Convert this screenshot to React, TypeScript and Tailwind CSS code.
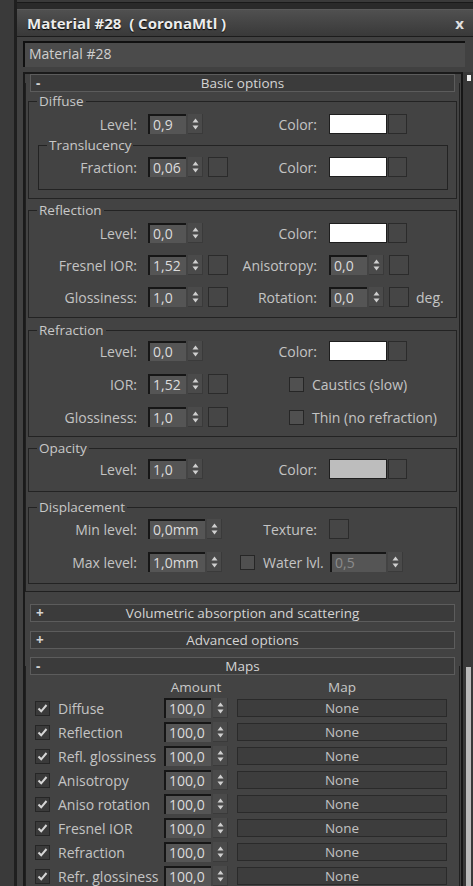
import { ReactNode } from "react";

const labelTxt = "text-[#c4c4c4]";

const Arrows = () => (
  <div className="ml-[2px] w-[15px] h-[20px] shrink-0 bg-[#4a4a4a] border-b border-r border-[#3a3a3a]">
    <svg width="15" height="20" viewBox="0 0 15 20">
      <path d="M4.5 8.5 L7.5 4.5 L10.5 8.5Z" fill="#d0d0d0" />
      <path d="M4.5 11.5 L7.5 15.5 L10.5 11.5Z" fill="#d0d0d0" />
    </svg>
  </div>
);

type TSpin = { value: string; field?: string; muted?: boolean };

const Spin = ({ value, field = "w-[38px]", muted }: TSpin) => (
  <div className="flex items-center h-[20px] shrink-0">
    <div
      className={`${field} h-[20px] border-t-2 border-l-2 border-[#161616] bg-[#555555] pl-[3px] text-[14px] leading-[17px] ${
        muted ? "text-[#8c8c8c]" : "text-[#dcdcdc]"
      }`}
    >
      {value}
    </div>
    <Arrows />
  </div>
);

const Sq = ({ ml = "ml-[5px]" }: { ml?: string }) => (
  <div className={`${ml} w-[20px] h-[20px] shrink-0 border border-[#2b2b2b] bg-[#464646]`} />
);

const Check = ({ on, dark }: { on?: boolean; dark?: boolean }) => (
  <div
    className={`w-[15px] h-[15px] shrink-0 border border-[#262626] flex items-center justify-center ${
      dark ? "bg-[#3a3a3a]" : "bg-[#505050]"
    }`}
  >
    {on && (
      <svg width="11" height="11" viewBox="0 0 11 11">
        <path d="M1.5 5.5 L4.2 8.3 L9.5 2" fill="none" stroke="#d6d6d6" strokeWidth="2" />
      </svg>
    )}
  </div>
);

const RLabel = ({ children }: { children: ReactNode }) => (
  <div className="w-[89px] shrink-0 text-right whitespace-nowrap">{children}</div>
);

const Color = ({ swatch = "bg-white" }: { swatch?: string }) => (
  <div className="ml-[12px] flex items-center">
    <div className={`w-[58px] h-[20px] ${swatch} border border-[#1e1e1e]`} />
    <div className="ml-[1px] w-[19px] h-[20px] border border-[#2b2b2b] bg-[#464646]" />
  </div>
);

type TRow = {
  lw?: string;
  label: string;
  value: string;
  map?: boolean;
  right?: ReactNode;
};

const Row = ({ lw = "w-[108px]", label, value, map, right }: TRow) => (
  <div className="flex items-center h-[20px]">
    <div className={`${lw} shrink-0 text-right whitespace-nowrap`}>{label}</div>
    <div className="ml-[11px]">
      <Spin value={value} />
    </div>
    {map ? <Sq /> : <div className="ml-[5px] w-[20px] shrink-0" />}
    {right}
  </div>
);

const Group = ({
  title,
  className = "",
  children,
}: {
  title: string;
  className?: string;
  children: ReactNode;
}) => (
  <fieldset className={`border border-[#232323] ${className}`}>
    <legend className="ml-[8px] px-[2px] text-[13.5px] leading-[16px] text-[#c8c8c8]">
      {title}
    </legend>
    {children}
  </fieldset>
);

const Header = ({ title, open }: { title: string; open?: boolean }) => (
  <div className="relative z-10 ml-[5px] mr-[6px] h-[18px] border border-[#5c5c5c] bg-[#3b3b3b] flex items-center text-[13.5px] leading-[16px] text-[#d4d4d4]">
    <span className="w-[16px] pl-[5px] font-bold">{open ? "-" : "+"}</span>
    <span className="flex-1 text-center">{title}</span>
    <span className="w-[16px]" />
  </div>
);

const mapRows = [
  "Diffuse",
  "Reflection",
  "Refl. glossiness",
  "Anisotropy",
  "Aniso rotation",
  "Fresnel IOR",
  "Refraction",
  "Refr. glossiness",
];

const MapRow = ({ name }: { name: string }) => (
  <div className="flex items-center h-[20px]">
    <div className="ml-[9px]">
      <Check on dark />
    </div>
    <div className="ml-[8px] w-[106px] shrink-0 whitespace-nowrap">{name}</div>
    <Spin value="100,0" field="w-[47px]" />
    <div className="ml-[9px] w-[210px] h-[18px] shrink-0 border border-[#2a2a2a] bg-[#3d3d3d] text-center text-[13.5px] leading-[16px] text-[#c2c2c2]">
      None
    </div>
  </div>
);

export default function App() {
  return (
    <div
      className={`w-[473px] h-[886px] overflow-hidden flex bg-[#2a2a2a] font-['Open_Sans',sans-serif] text-[14px] ${labelTxt}`}
    >
      <div className="w-[17px] shrink-0 bg-[#3a3a3a] border-r-[3px] border-[#1f1f1f]" />
      <div className="flex-1 flex flex-col min-w-0">
        <div className="h-[3px] bg-[#3a3a3a] border-b border-[#1a1a1a]" />
        <div className="h-[7px]" />
        <div className="bg-[#414141] flex-1 flex flex-col border-t border-[#5a5a5a]">
          <div className="h-[27px] pl-[10px] pr-[9px] flex items-center justify-between bg-linear-to-b from-[#505050] to-[#393939] border-b border-[#1c1c1c]">
            <span className="text-[15px] font-bold text-[#ececec] [text-shadow:0_1px_1px_#000] whitespace-pre">
              Material #28  ( CoronaMtl )
            </span>
            <span className="text-[15px] font-bold text-[#e0e0e0] leading-none">x</span>
          </div>
          <div className="mt-[4px] ml-[6px] w-[442px] h-[26px] border-t-2 border-l-2 border-[#101010] bg-[#4b4b4b] pl-[4px] text-[14px] leading-[22px] text-[#cfcfcf]">
            Material #28
          </div>
          <div className="mt-[5px] ml-[6px] flex flex-1 min-h-0">
            <div className="w-[438px] shrink-0 border-t-2 border-l-2 border-[#1a1a1a] bg-[#424242] flex flex-col">
              {/* Basic options */}
              <div>
                <Header title="Basic options" open />
                <div className="-mt-[9px] pt-[10px] mr-[1px] px-[2px] pb-[7px] border-x border-b border-[#202020] bg-[#434343]">
                  <Group title="Diffuse">
                    <div className="pt-[5px] pb-[8px]">
                      <Row label="Level:" value="0,9" right={<><RLabel>Color:</RLabel><Color /></>} />
                      <Group title="Translucency" className="mt-[3px] ml-[9px] mr-[8px]">
                        <div className="pt-[4px] pb-[12px]">
                          <Row
                            lw="w-[98px]"
                            label="Fraction:"
                            value="0,06"
                            map
                            right={<><RLabel>Color:</RLabel><Color /></>}
                          />
                        </div>
                      </Group>
                    </div>
                  </Group>

                  <Group title="Reflection" className="mt-[3px]">
                    <div className="pt-[5px] pb-[10px] flex flex-col gap-[12px]">
                      <Row label="Level:" value="0,0" right={<><RLabel>Color:</RLabel><Color /></>} />
                      <Row
                        label="Fresnel IOR:"
                        value="1,52"
                        map
                        right={
                          <>
                            <RLabel>Anisotropy:</RLabel>
                            <div className="ml-[12px]">
                              <Spin value="0,0" />
                            </div>
                            <Sq />
                          </>
                        }
                      />
                      <Row
                        label="Glossiness:"
                        value="1,0"
                        map
                        right={
                          <>
                            <RLabel>Rotation:</RLabel>
                            <div className="ml-[12px]">
                              <Spin value="0,0" />
                            </div>
                            <Sq />
                            <span className="ml-[7px]">deg.</span>
                          </>
                        }
                      />
                    </div>
                  </Group>

                  <Group title="Refraction" className="mt-[4px]">
                    <div className="pt-[3px] pb-[9px] flex flex-col gap-[13px]">
                      <Row label="Level:" value="0,0" right={<><RLabel>Color:</RLabel><Color /></>} />
                      <Row
                        label="IOR:"
                        value="1,52"
                        map
                        right={
                          <div className="ml-[61px] flex items-center">
                            <Check />
                            <span className="ml-[8px] whitespace-nowrap">Caustics (slow)</span>
                          </div>
                        }
                      />
                      <Row
                        label="Glossiness:"
                        value="1,0"
                        map
                        right={
                          <div className="ml-[61px] flex items-center">
                            <Check />
                            <span className="ml-[8px] whitespace-nowrap">Thin (no refraction)</span>
                          </div>
                        }
                      />
                    </div>
                  </Group>

                  <Group title="Opacity" className="mt-[3px]">
                    <div className="pt-[3px] pb-[12px]">
                      <Row
                        label="Level:"
                        value="1,0"
                        right={<><RLabel>Color:</RLabel><Color swatch="bg-[#bdbdbd]" /></>}
                      />
                    </div>
                  </Group>

                  <Group title="Displacement" className="mt-[7px]">
                    <div className="pt-[4px] pb-[11px] flex flex-col gap-[13px]">
                      <div className="flex items-center h-[20px]">
                        <div className="w-[108px] shrink-0 text-right">Min level:</div>
                        <div className="ml-[11px]">
                          <Spin value="0,0mm" field="w-[57px]" />
                        </div>
                        <div className="ml-[6px]" />
                        <RLabel>Texture:</RLabel>
                        <Sq ml="ml-[12px]" />
                      </div>
                      <div className="flex items-center h-[20px]">
                        <div className="w-[108px] shrink-0 text-right">Max level:</div>
                        <div className="ml-[11px]">
                          <Spin value="1,0mm" field="w-[57px]" />
                        </div>
                        <div className="ml-[18px]">
                          <Check />
                        </div>
                        <span className="ml-[8px] w-[62px] shrink-0 whitespace-nowrap">Water lvl.</span>
                        <div className="ml-[5px]">
                          <Spin value="0,5" field="w-[56px]" muted />
                        </div>
                      </div>
                    </div>
                  </Group>
                </div>
              </div>

              <div className="mt-[12px]">
                <Header title="Volumetric absorption and scattering" />
              </div>
              <div className="mt-[9px]">
                <Header title="Advanced options" />
              </div>
              <div className="mt-[8px] flex-1 flex flex-col">
                <Header title="Maps" open />
                <div className="-mt-[9px] pt-[9px] mr-[1px] flex-1 border-x border-[#202020] bg-[#434343]">
                  <div className="mt-[4px] h-[16px] flex items-center text-[13.5px] text-[#c8c8c8]">
                    <div className="w-[138px] shrink-0" />
                    <div className="w-[64px] shrink-0 text-center">Amount</div>
                    <div className="ml-[9px] w-[210px] shrink-0 text-center">Map</div>
                  </div>
                  <div className="mt-[3px] flex flex-col gap-[4px]">
                    {mapRows.map((name) => (
                      <MapRow key={name} name={name} />
                    ))}
                  </div>
                </div>
              </div>
            </div>
            <div className="w-[12px] shrink-0 flex flex-col bg-[#383838] border-l-2 border-[#161616]">
              <div className="mt-[3px] ml-[4px] w-[4px] h-[6px] bg-[#f0f0f0]" />
              <div className="flex-1" />
              <div className="ml-[3px] w-[5px] h-[219px] bg-[#b9b9b9]" />
            </div>
          </div>
        </div>
      </div>
    </div>
  );
}
